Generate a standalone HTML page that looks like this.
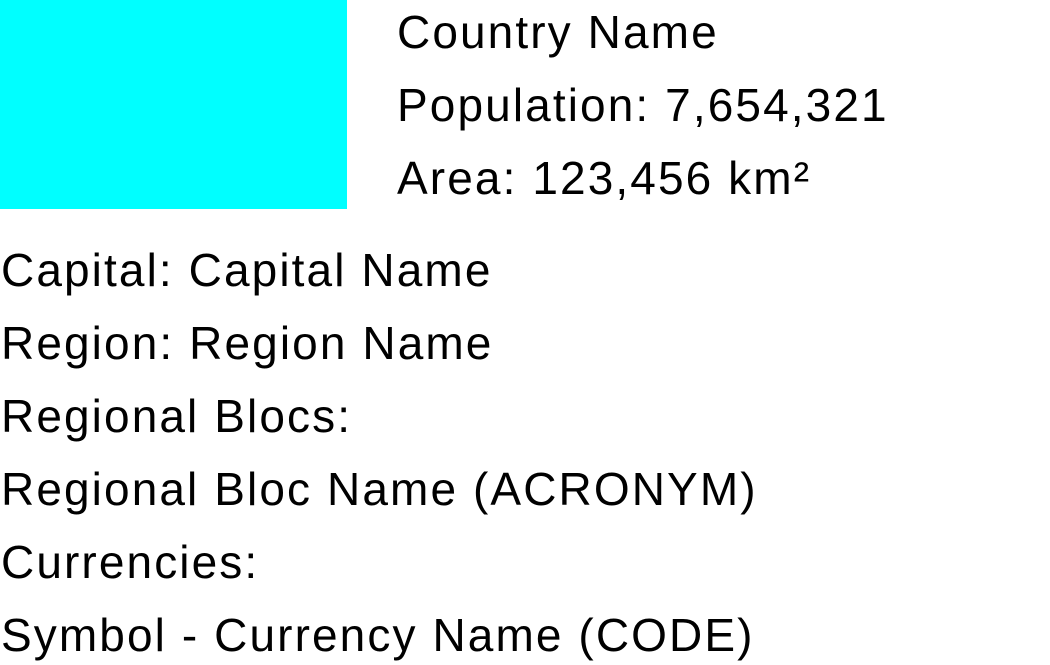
<!DOCTYPE html>
<html><head><meta charset="utf-8"><style>
html,body{margin:0;padding:0;background:#fff;width:1050px;height:665px;overflow:hidden}
body{font-family:"Liberation Sans",sans-serif;font-size:46px;color:#000;position:relative}
.box{position:absolute;left:0;top:0;width:347px;height:209px;background:#00ffff}
.t{position:absolute;line-height:73px;white-space:nowrap;letter-spacing:2.1px}
</style></head><body>
<div class="box"></div>
<div class="t" style="left:397px;top:-4px">Country Name<br>Population: 7,654,321<br>Area: 123,456 km²</div>
<div class="t" style="left:1px;top:234px">Capital: Capital Name<br>Region: Region Name<br>Regional Blocs:<br>Regional Bloc Name (ACRONYM)<br>Currencies:<br>Symbol - Currency Name (CODE)</div>
</body></html>
